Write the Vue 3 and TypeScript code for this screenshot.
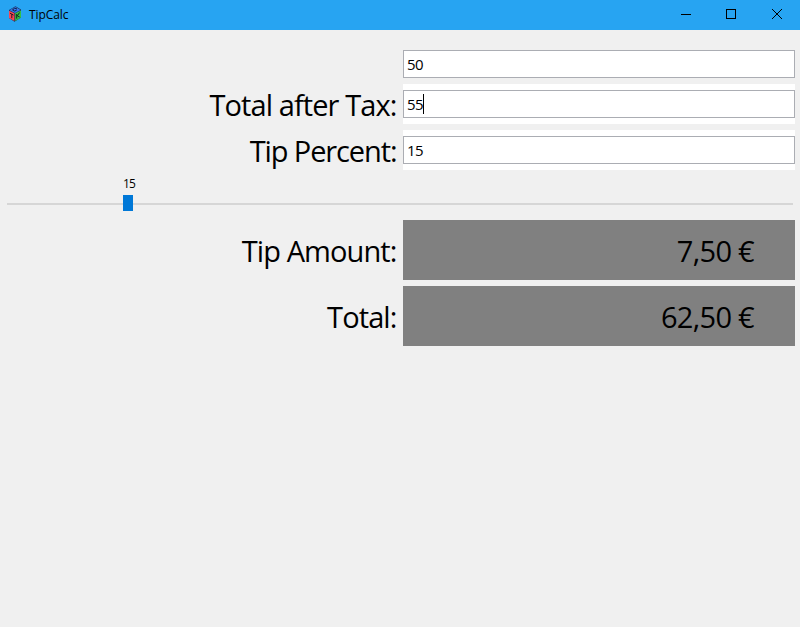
<script setup lang="ts">
import { computed, ref } from 'vue'

const subtotal = ref(50)
const afterTax = ref(55)
const percent = ref(15)

const tip = computed(() => (subtotal.value * percent.value) / 100)
const total = computed(() => afterTax.value + tip.value)
const thumbLeft = computed(() => `${(percent.value / 100) * 776}px`)

function money(value: number): string {
  return `${value.toFixed(2).replace('.', ',')} €`
}
</script>

<template>
  <div class="window">
    <header class="titlebar">
      <svg class="logo" width="16" height="16" viewBox="0 0 16 16">
        <path d="M2 4 8.500 .3 14 3.500v8L7.500 15.700 2 12z" fill="#1b3050" />
        <path d="M2 4.700 7.400 7.300v7.800L2 12z" fill="#fa4654" />
        <path d="m8.200 7.300 5.800-2.900v7.200l-5.800 3.500z" fill="#35c244" />
        <path d="M8.300 .8 13.600 3.900 8 6.900 2.500 4.200z" fill="#3478f0" />
        <path d="M9.800 2.700 7.600 2.200 5.600 3.800l2.200 1.300 2-1.200M3 7.200l3.500 1.900M4.800 8.200v4M9.700 8v4.600M12.600 6.500l-2.300 3.300 2.400 1.200" fill="none" stroke="#10141f" stroke-width=".9" />
      </svg>
      <span class="title">TipCalc</span>
      <div class="controls">
        <svg width="46" height="30" viewBox="0 0 46 30" shape-rendering="crispEdges"><path d="M18 14.500h10" stroke="#000" /></svg>
        <svg width="45" height="30" viewBox="0 0 45 30" shape-rendering="crispEdges"><path d="M17.500 9.500h9v9h-9z" fill="none" stroke="#000" /></svg>
        <svg width="46" height="30" viewBox="0 0 46 30"><path d="m18 9 10 10M28 9 18 19" stroke="#000" /></svg>
      </div>
    </header>

    <main class="form">
      <div class="row first">
        <div class="label"></div>
        <div class="field"><div class="entry">{{ subtotal }}</div></div>
      </div>
      <div class="row">
        <div class="label after-tax">Total after Tax:</div>
        <div class="field padded"><div class="entry">{{ afterTax }}<i class="caret"></i></div></div>
      </div>
      <div class="row">
        <div class="label percent">Tip Percent:</div>
        <div class="field padded"><div class="entry">{{ percent }}</div></div>
      </div>
      <div class="scale">
        <div class="trough"></div>
        <div class="thumb" :style="{ left: thumbLeft }"><span class="scale-value">{{ percent }}</span></div>
      </div>
      <div class="row result">
        <div class="label amount">Tip Amount:</div>
        <div class="output">{{ money(tip) }}</div>
      </div>
      <div class="row result">
        <div class="label total">Total:</div>
        <div class="output">{{ money(total) }}</div>
      </div>
    </main>
  </div>
</template>

<style>
body {
  background: #f0f0f0;
}
</style>

<style scoped>
.window {
  width: 800px;
  height: 627px;
  overflow: hidden;
  background: #f0f0f0;
  color: #000;
  font-family: "Open Sans", "Noto Sans", sans-serif;
}
.titlebar {
  display: flex;
  align-items: center;
  height: 30px;
  padding-left: 7px;
  background: #27a4f2;
}
.logo {
  margin-top: -2px;
}
.title {
  margin-left: 6px;
  font-size: 12px;
  line-height: 30px;
  letter-spacing: -0.1px;
}
.controls {
  display: flex;
  margin-left: auto;
}
.form {
  display: flex;
  flex-direction: column;
  padding: 20px 5px 0;
}
.row {
  display: grid;
  grid-template-columns: 392px 392px;
  grid-template-rows: 100%;
  column-gap: 6px;
  height: 40px;
  margin-bottom: 6px;
}
.row.first {
  height: 28px;
}
.row.result {
  height: 60px;
}
.label {
  box-sizing: border-box;
  padding-right: 0.5px;
  font-size: 29px;
  line-height: 41px;
  letter-spacing: -0.9px;
  text-align: right;
  white-space: nowrap;
}
.percent {
  letter-spacing: -1.1px;
}
.result .label,
.output {
  line-height: 61px;
}
.padded {
  box-sizing: border-box;
  padding: 6px 0;
  background: #fff;
}
.entry {
  display: flex;
  align-items: center;
  box-sizing: border-box;
  height: 28px;
  padding-left: 3px;
  border: 1px solid #abadb3;
  background: #fff;
  font-size: 15px;
  letter-spacing: -0.5px;
}
.caret {
  width: 1px;
  height: 20px;
  background: #000;
}
.scale {
  position: relative;
  height: 50px;
  margin: -6px 2px 0;
  padding-top: 33px;
  box-sizing: border-box;
}
.trough {
  height: 2px;
  background: #d6d6d6;
}
.thumb {
  position: absolute;
  top: 25px;
  width: 10px;
  height: 16px;
  background: #0078d7;
}
.scale-value {
  position: absolute;
  left: -0.5px;
  top: -19px;
  font-size: 12px;
  line-height: 16px;
  letter-spacing: -0.8px;
}
.output {
  box-sizing: border-box;
  padding-right: 41px;
  background: #808080;
  font-size: 29px;
  letter-spacing: -0.7px;
  text-align: right;
}
</style>
